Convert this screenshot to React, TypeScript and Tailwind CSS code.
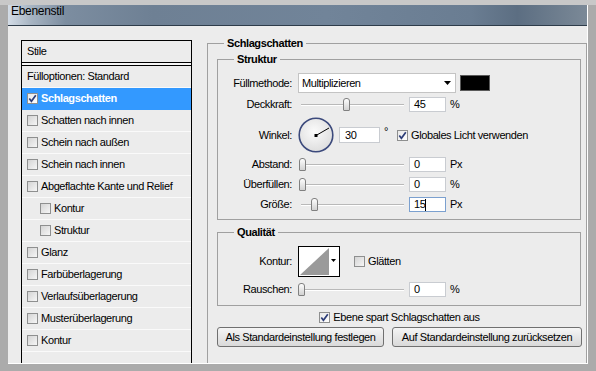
import React from "react";

function Box({ checked }: { checked?: boolean }) {
  return (
    <span
      className={
        "inline-flex w-[11px] h-[11px] shrink-0 items-center justify-center border border-[#8e8f8f] " +
        (checked ? "bg-linear-to-br from-[#e8e8e8] to-[#ffffff]" : "bg-linear-to-br from-[#d4d4d4] to-[#f6f6f6]")
      }
    >
      {checked && (
        <svg width="9" height="9" viewBox="0 0 9 9">
          <path d="M1.3 4.6 L3.4 7.3 L7.8 1.2" fill="none" stroke="#2d3d78" strokeWidth="1.7" />
        </svg>
      )}
    </span>
  );
}

function Slider({ pos }: { pos: number }) {
  return (
    <div className="relative w-[107px] h-[15px] flex items-center">
      <div className="ml-[3px] w-[103px] h-[2px] border-t border-[#b9b9b9] bg-white" />
      <div
        className="absolute top-[1px] w-[7px] h-[13px] border border-[#808080] rounded-t-[3px] rounded-b-[1px] bg-linear-to-b from-[#fdfdfd] to-[#d2d2d2]"
        style={{ left: pos }}
      />
    </div>
  );
}

function Num({ v, focus }: { v: string; focus?: boolean }) {
  return (
    <div
      className={
        "ml-[4px] w-[37px] h-[15px] bg-white flex items-center pl-[4px] border " +
        (focus ? "border-[#7ba0cf]" : "border-[#c9ccd1]")
      }
    >
      <span className="leading-[13px]">{v}</span>
      {focus && <span className="w-[1px] h-[12px] bg-black" />}
    </div>
  );
}

function Label({ t }: { t: string }) {
  return <div className="w-[75px] text-right shrink-0 pr-[1px]">{t}</div>;
}

const items: { t: string; c?: boolean; sel?: boolean; sub?: boolean }[] = [
  { t: "Schlagschatten", c: true, sel: true },
  { t: "Schatten nach innen" },
  { t: "Schein nach außen" },
  { t: "Schein nach innen" },
  { t: "Abgeflachte Kante und Relief" },
  { t: "Kontur", sub: true },
  { t: "Struktur", sub: true },
  { t: "Glanz" },
  { t: "Farbüberlagerung" },
  { t: "Verlaufsüberlagerung" },
  { t: "Musterüberlagerung" },
  { t: "Kontur" },
];

export default function App() {
  return (
    <div className="w-[596px] h-[371px] overflow-hidden bg-[#ababab] border-t-[5px] border-t-[#c8c8c8] px-[8px] pb-[7px] font-['Liberation_Sans',Arial,sans-serif] text-[11px] tracking-[-0.4px] text-black leading-[13px]">
      <div className="w-[580px] h-[359px] flex flex-col bg-[#ececec] border-r border-b border-white overflow-hidden">
        {/* title bar */}
        <div className="h-[21px] shrink-0 border-b border-[#2e3c4a] bg-[linear-gradient(90deg,#d3dce6_0%,#a7b4c2_4%,#7c8da0_10%,#6e8094_25%,#718499_55%,#6a7d92_80%,#5c6e82_88%,#7b8997_100%)] flex items-start pl-[3px]">
          <span className="text-[12px] tracking-[-0.3px] leading-[13px] text-black">Ebenenstil</span>
        </div>
        {/* content */}
        <div className="flex-1 flex items-start pl-[13px] overflow-hidden">
          {/* left panel */}
          <div className="mt-[14px] w-[171px] h-[400px] shrink-0 border border-black border-b-0 bg-[#ececec]">
            <div className="h-[22px] border-b border-black flex items-center pl-[5px]">Stile</div>
            <div className="h-[2px] bg-[#f6f6f6]" />
            <div className="border-t border-black" />
            <div className="h-[22px] border-b border-[#fafafa] flex items-center pl-[5px]">Fülloptionen: Standard</div>
            {items.map((it, i) => (
              <div
                key={i}
                className={
                  "h-[22px] border-b flex items-center gap-[3px] " +
                  (it.sub ? "pl-[18px] " : "pl-[5px] ") +
                  (it.sel ? "bg-[#3399ff] border-[#3399ff] text-white font-bold" : "border-[#fafafa]")
                }
              >
                <Box checked={it.c} />
                <span>{it.t}</span>
              </div>
            ))}
          </div>

          {/* right: Schlagschatten group */}
          <fieldset className="ml-[15px] mt-[11px] w-[380px] h-[420px] shrink-0 border border-[#a0a0a0] pl-[9px]">
            <legend className="ml-[7px] px-[3px] font-bold leading-[13px]">Schlagschatten</legend>

            {/* Struktur */}
            <fieldset className="mt-[3px] w-[364px] border border-[#a0a0a0] pt-[7px] pb-[7px]">
              <legend className="ml-[16px] px-[3px] font-bold leading-[13px]">Struktur</legend>

              <div className="h-[20px] flex items-center">
                <Label t="Füllmethode:" />
                <div className="ml-[5px] w-[158px] h-[20px] bg-white border border-[#c4c4c4] flex items-center pl-[3px] pr-[4px] justify-between">
                  <span>Multiplizieren</span>
                  <svg width="7" height="4" viewBox="0 0 7 4">
                    <path d="M0 0 H7 L3.5 4 Z" fill="#000" />
                  </svg>
                </div>
                <div className="ml-[4px] w-[30px] h-[16px] bg-black border border-[#5a5a5a]" />
              </div>

              <div className="mt-[4px] h-[15px] flex items-center">
                <Label t="Deckkraft:" />
                <div className="ml-[5px]">
                  <Slider pos={45} />
                </div>
                <Num v="45" />
                <span className="ml-[4px]">%</span>
              </div>

              <div className="mt-[5px] h-[36px] flex items-center">
                <Label t="Winkel:" />
                <svg className="ml-[5px]" width="36" height="36" viewBox="0 0 36 36">
                  <defs>
                    <radialGradient id="dial" cx="45%" cy="40%" r="60%">
                      <stop offset="0%" stopColor="#fbfbfb" />
                      <stop offset="100%" stopColor="#dedede" />
                    </radialGradient>
                  </defs>
                  <circle cx="18" cy="18" r="16.8" fill="url(#dial)" stroke="#3c4a7c" strokeWidth="1.6" />
                  <line x1="18" y1="18.5" x2="31" y2="11" stroke="#000" strokeWidth="1" />
                  <rect x="16.5" y="17" width="3" height="3" fill="#000" />
                </svg>
                <div className="ml-[5px] w-[41px] h-[16px] bg-white border border-[#c9ccd1] flex items-center pl-[5px]">30</div>
                <span className="ml-[4px] self-start mt-[9px] leading-[10px]">°</span>
                <div className="ml-[9px] flex items-center gap-[3px]">
                  <Box checked />
                  <span>Globales Licht verwenden</span>
                </div>
              </div>

              <div className="mt-[4px] h-[15px] flex items-center">
                <Label t="Abstand:" />
                <div className="ml-[5px]">
                  <Slider pos={1} />
                </div>
                <Num v="0" />
                <span className="ml-[4px]">Px</span>
              </div>

              <div className="mt-[5px] h-[15px] flex items-center">
                <Label t="Überfüllen:" />
                <div className="ml-[5px]">
                  <Slider pos={1} />
                </div>
                <Num v="0" />
                <span className="ml-[4px]">%</span>
              </div>

              <div className="mt-[5px] h-[15px] flex items-center">
                <Label t="Größe:" />
                <div className="ml-[5px]">
                  <Slider pos={13} />
                </div>
                <Num v="15" focus />
                <span className="ml-[4px]">Px</span>
              </div>
            </fieldset>

            {/* Qualität */}
            <fieldset className="mt-[6px] w-[364px] border border-[#a0a0a0] pt-[7px] pb-[8px]">
              <legend className="ml-[16px] px-[3px] font-bold leading-[13px]">Qualität</legend>
              <div className="h-[31px] flex items-center">
                <Label t="Kontur:" />
                <svg className="ml-[5px]" width="42" height="31" viewBox="0 0 42 31">
                  <rect x="0.5" y="0.5" width="41" height="30" fill="#fff" stroke="#000" />
                  <polygon points="2,29 31,29 31,2" fill="#9a9a9a" />
                  <path d="M33 13 H38 L35.5 16 Z" fill="#000" />
                </svg>
                <div className="ml-[14px] flex items-center gap-[3px]">
                  <Box />
                  <span>Glätten</span>
                </div>
              </div>
              <div className="mt-[5px] h-[15px] flex items-center">
                <Label t="Rauschen:" />
                <div className="ml-[5px]">
                  <Slider pos={0} />
                </div>
                <Num v="0" />
                <span className="ml-[4px]">%</span>
              </div>
            </fieldset>

            <div className="mt-[5px] w-[365px] h-[12px] flex items-center justify-center gap-[3px]">
              <Box checked />
              <span>Ebene spart Schlagschatten aus</span>
            </div>

            <div className="mt-[4px] flex gap-[8px]">
              <div className="w-[167px] h-[20px] flex items-center justify-center rounded-[3px] border border-[#707070] bg-linear-to-b from-[#f5f5f5] to-[#d9d9d9]">
                Als Standardeinstellung festlegen
              </div>
              <div className="w-[190px] h-[20px] flex items-center justify-center rounded-[3px] border border-[#707070] bg-linear-to-b from-[#f5f5f5] to-[#d9d9d9]">
                Auf Standardeinstellung zurücksetzen
              </div>
            </div>
          </fieldset>
        </div>
      </div>
    </div>
  );
}
